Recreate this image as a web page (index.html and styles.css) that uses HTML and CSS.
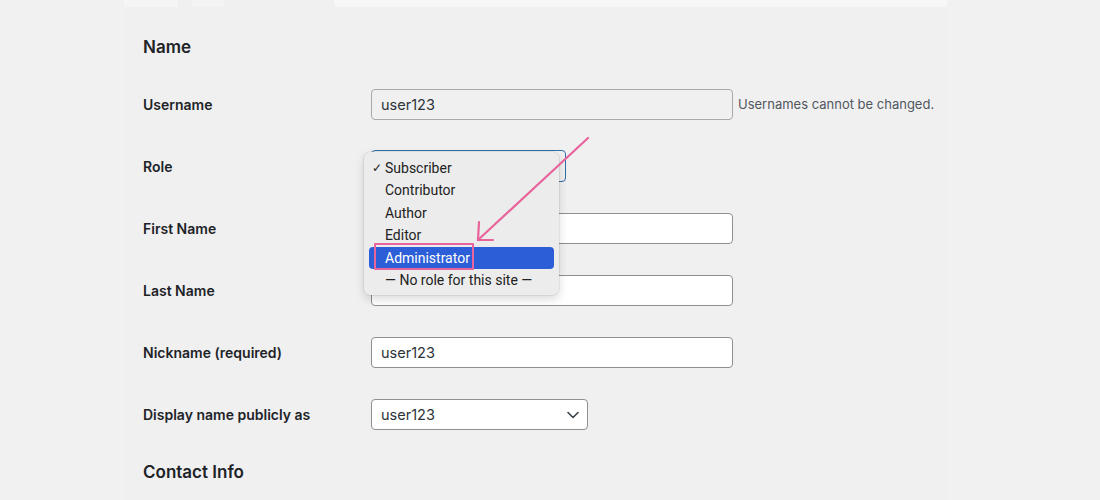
FILE: index.html
```html
<!DOCTYPE html>
<html>
<head>
<meta charset="utf-8">
<link rel="stylesheet" href="styles.css">
</head>
<body>
<div class="panel">
  <div class="tabs">
    <span class="tab t1"></span>
    <span class="tab t2"></span>
    <span class="tab t3"></span>
  </div>
  <h2 class="section">Name</h2>
  <div class="form">
    <div class="label">Username</div>
    <div class="field"><div class="input disabled">user123</div><span class="hint">Usernames cannot be changed.</span></div>

    <div class="label">Role</div>
    <div class="field"><div class="select role"></div></div>

    <div class="label">First Name</div>
    <div class="field"><div class="input"></div></div>

    <div class="label">Last Name</div>
    <div class="field"><div class="input"></div></div>

    <div class="label">Nickname (required)</div>
    <div class="field"><div class="input">user123</div></div>

    <div class="label">Display name publicly as</div>
    <div class="field"><div class="select display">user123
      <svg class="chev" width="12" height="8" viewBox="0 0 12 8"><path d="M1 1.5 L6 6.5 L11 1.5" fill="none" stroke="#3c434a" stroke-width="1.6" stroke-linecap="round" stroke-linejoin="round"/></svg>
    </div></div>
  </div>
  <h2 class="section contact">Contact Info</h2>

  <div class="menu">
    <div class="opt"><span class="check">✓</span>Subscriber</div>
    <div class="opt">Contributor</div>
    <div class="opt">Author</div>
    <div class="opt">Editor</div>
    <div class="opt active">Administrator</div>
    <div class="opt">— No role for this site —</div>
  </div>
  <div class="mark"></div>
  <svg class="arrow" width="140" height="130" viewBox="0 0 140 130">
    <g fill="none" stroke="#e8649b" stroke-width="2.2" stroke-linecap="round" stroke-linejoin="round">
      <path d="M126 6 L16 108"/>
      <path d="M17 90 L16 108 L31 108"/>
    </g>
  </svg>
</div>
</body>
</html>
```
FILE: styles.css
```css
html, body {
  margin: 0;
  padding: 0;
  background: #f1f1f1;
  font-family: Inter, "Open Sans", "Liberation Sans", sans-serif;
  color: #1d2327;
}
.panel {
  position: relative;
  margin-left: 124px;
  width: 823px;
  height: 500px;
  background: #f0f0f1;
  overflow: hidden;
}
.tabs {
  display: flex;
  height: 7px;
}
.tab { height: 7px; display: block; }
.t1 { width: 54px; background: #f5f5f5; }
.t2 { width: 32px; margin-left: 14px; background: #f3f3f3; }
.t3 { flex: 1; margin-left: 110px; background: #f7f7f7; border-radius: 0 0 0 4px; }
.section {
  margin: 29px 0 15px 19px;
  font-size: 17px;
  line-height: 22px;
  font-weight: 600;
}
.contact { margin-top: 16px; }
.form {
  display: grid;
  grid-template-columns: 228px 1fr;
  grid-auto-rows: 62px;
  margin-left: 19px;
  align-items: center;
}
.label {
  font-size: 14px;
  font-weight: 600;
  color: #1d2327;
}
.field {
  display: flex;
  align-items: center;
  gap: 5px;
}
.input, .select {
  box-sizing: border-box;
  height: 31px;
  border: 1px solid #8c8f94;
  border-radius: 4px;
  background: #fff;
  font-size: 14.5px;
  color: #2c3338;
  padding: 0 9px;
  display: flex;
  align-items: center;
}
.input { width: 362px; }
.input.disabled { background: #f0f0f1; border-color: #a7aaad; }
.hint { font-size: 13px; color: #50575e; }
.select.role {
  width: 195px;
  height: 32px;
  border: 1.5px solid #2f6ea8;
  background: #f0f0f1;
}
.select.display {
  width: 217px;
  justify-content: space-between;
  padding-right: 8px;
}
.chev { margin-top: 1px; }
.menu {
  position: absolute;
  left: 240px;
  top: 152px;
  width: 195px;
  height: 143px;
  box-sizing: border-box;
  padding: 5px 5px 4px;
  background: #ececec;
  border-radius: 6px;
  box-shadow: 0 0 0 0.5px rgba(0,0,0,0.12), 0 4px 10px rgba(0,0,0,0.15);
  font-family: Roboto, "Liberation Sans", sans-serif;
  font-size: 14px;
  color: #222;
}
.opt {
  position: relative;
  height: 22.4px;
  line-height: 22.4px;
  padding-left: 16px;
  border-radius: 4px;
}
.check {
  position: absolute;
  left: 3px;
  font-size: 12px;
}
.opt.active {
  background: #2c5ed8;
  color: #fff;
}
.mark {
  position: absolute;
  left: 250px;
  top: 243px;
  width: 100px;
  height: 27px;
  box-sizing: border-box;
  border: 2px solid #e8649b;
  border-radius: 1px;
}
.arrow {
  position: absolute;
  left: 338px;
  top: 132px;
}
```
